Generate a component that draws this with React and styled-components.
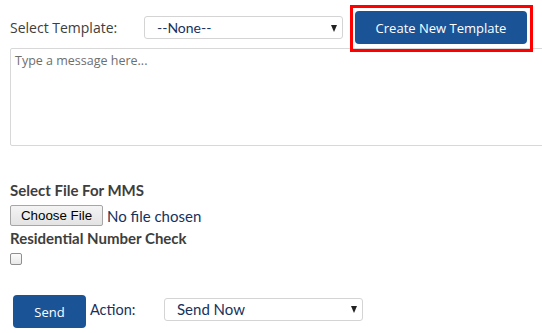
import React from "react";
import styled, { createGlobalStyle } from "styled-components";

const Global = createGlobalStyle`
  html, body { margin: 0; padding: 0; background: #fff; }
  body { font-family: "Open Sans", "Liberation Sans", sans-serif; color: #3e3e3c; overflow: hidden; }
`;

const Page = styled.div`
  padding: 11px 0 0 10px;
  width: 542px;
  box-sizing: border-box;
`;

const TemplateRow = styled.div`
  display: flex;
  align-items: center;
  height: 33px;
`;

const Label = styled.span`
  font-family: "Open Sans", sans-serif;
  font-size: 14px;
  color: #3e3e3c;
  width: ${(p) => p.$w}px;
  flex: none;
`;

const Select = styled.div`
  box-sizing: border-box;
  width: 199px;
  height: 23px;
  border: 1px solid #d4d4d4;
  border-radius: 3px;
  background: #fff;
  display: flex;
  align-items: center;
  justify-content: space-between;
  padding: 0 5px 0 12px;
  font-family: "Lato", sans-serif;
  font-size: ${(p) => p.$fs || 14}px;
  color: #16325c;
  flex: none;
  margin-top: ${(p) => p.$mt || 0}px;
`;

const Caret = styled.span`
  width: 0;
  height: 0;
  border-left: 3.5px solid transparent;
  border-right: 3.5px solid transparent;
  border-top: 7px solid #222;
  margin-top: 1px;
`;

const AnnotatedWrap = styled.div`
  position: relative;
  margin-left: 12px;
  &::after {
    content: "";
    position: absolute;
    top: -6px;
    left: -5px;
    right: -6px;
    bottom: -8px;
    border: 3px solid #f00;
    pointer-events: none;
  }
`;

const BlueButton = styled.button`
  box-sizing: border-box;
  width: ${(p) => p.$w}px;
  height: 33px;
  background: #1b5397;
  border: none;
  border-radius: 4px;
  color: #fff;
  font-family: "Open Sans", sans-serif;
  font-size: 13px;
  padding: 0;
  display: flex;
  align-items: center;
  justify-content: center;
  flex: none;
`;

const MessageBox = styled.div`
  box-sizing: border-box;
  margin-top: 4px;
  width: 540px;
  height: 98px;
  border: 1px solid #d8d8d8;
  border-radius: 2px;
  padding: 3px 4px;
  font-family: "Open Sans", sans-serif;
  font-size: 12.5px;
  color: #6e6e6e;
`;

const BoldLabel = styled.div`
  font-family: "Lato", sans-serif;
  font-weight: 700;
  font-size: 15px;
  color: #3e3e3c;
  line-height: 18px;
  margin-top: ${(p) => p.$mt}px;
`;

const FileRow = styled.div`
  display: flex;
  align-items: center;
  margin-top: 6px;
  gap: 4px;
`;

const FileButton = styled.span`
  box-sizing: border-box;
  width: 93px;
  height: 21px;
  border: 1px solid #a6a6a6;
  border-radius: 2px;
  background: linear-gradient(#f4f4f4, #e3e3e3);
  font-family: "Liberation Sans", Arial, sans-serif;
  font-size: 13.33px;
  color: #000;
  display: flex;
  align-items: center;
  justify-content: center;
`;

const FileText = styled.span`
  font-family: "Lato", sans-serif;
  font-size: 15px;
  color: #16325c;
`;

const Checkbox = styled.span`
  display: block;
  box-sizing: border-box;
  width: 12px;
  height: 12px;
  border: 1px solid #8f8f8f;
  border-radius: 2px;
  background: linear-gradient(#fcfcfc, #e8e8e8);
  margin-top: 6px;
`;

const ActionRow = styled.div`
  display: flex;
  align-items: center;
  margin-top: 30px;
  margin-left: 3px;
`;

const ActionLabel = styled.span`
  font-family: "Lato", sans-serif;
  font-size: 14.5px;
  color: #16325c;
  margin-left: 4px;
  margin-top: -4px;
  width: 74px;
`;

export default function App() {
  return (
    <>
      <Global />
      <Page>
        <TemplateRow>
          <Label $w={134}>Select Template:</Label>
          <Select>
            <span>--None--</span>
            <Caret />
          </Select>
          <AnnotatedWrap>
            <BlueButton $w={172}>Create New Template</BlueButton>
          </AnnotatedWrap>
        </TemplateRow>
        <MessageBox>Type a message here...</MessageBox>
        <BoldLabel $mt={35}>Select File For MMS</BoldLabel>
        <FileRow>
          <FileButton>Choose File</FileButton>
          <FileText>No file chosen</FileText>
        </FileRow>
        <BoldLabel $mt={3}>Residential Number Check</BoldLabel>
        <Checkbox />
        <ActionRow>
          <BlueButton $w={73}>Send</BlueButton>
          <ActionLabel>Action:</ActionLabel>
          <Select $mt={-5} $fs={15}>
            <span>Send Now</span>
            <Caret />
          </Select>
        </ActionRow>
      </Page>
    </>
  );
}
